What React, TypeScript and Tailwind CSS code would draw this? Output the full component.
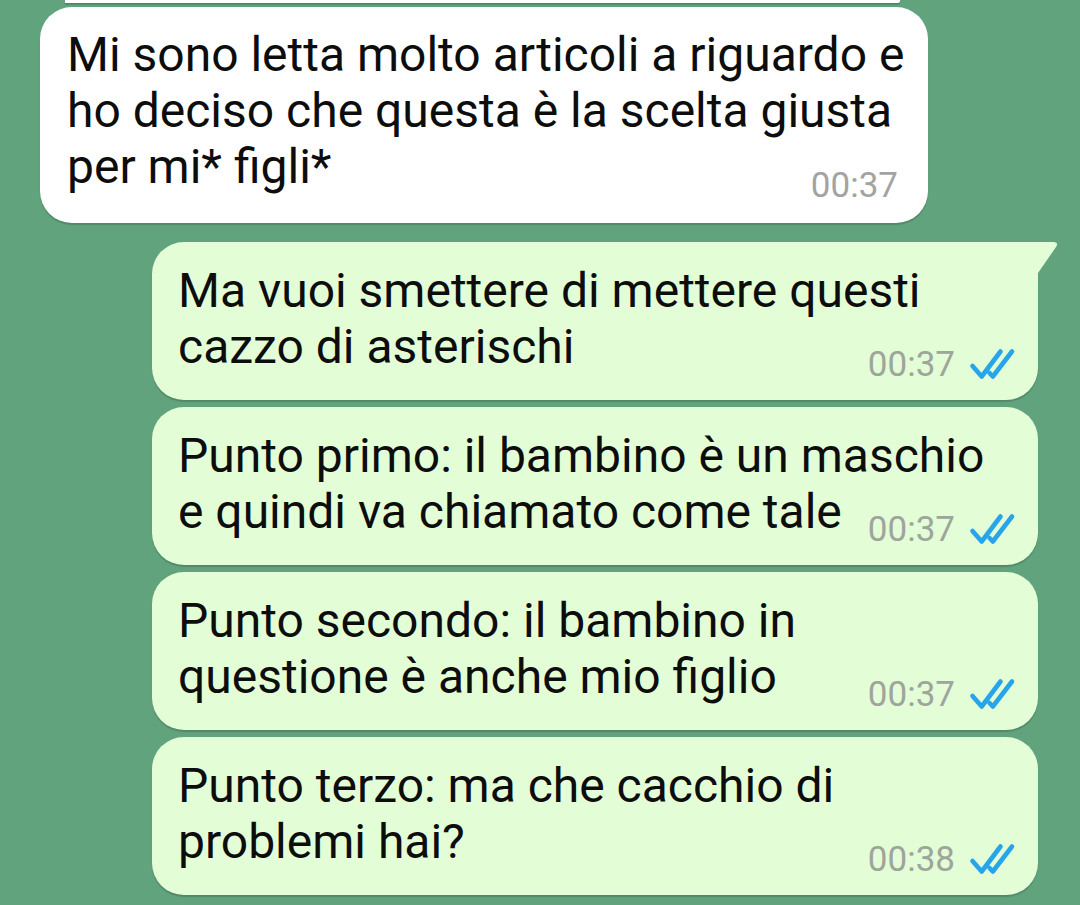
import React from "react";

function Checks() {
  return (
    <svg width="48" height="32" viewBox="0 0 48 32" fill="none" className="shrink-0 -mt-[3px]">
      <path d="M4.5 18 L13.7 28.5 L32.5 3.5" stroke="#27a5ea" strokeWidth="4.6" strokeLinecap="round" strokeLinejoin="round" />
      <path d="M21.5 25 L24.8 28.5 L44 3.5" stroke="#27a5ea" strokeWidth="4.6" strokeLinecap="round" strokeLinejoin="round" />
    </svg>
  );
}

function Outgoing({ lines, time, tail }: { lines: string[]; time: string; tail?: boolean }) {
  return (
    <div
      className={
        "relative w-[886px] bg-[#e3fdd7] pl-[26px] pr-[22px] pt-[21px] pb-[15px] flex flex-col shadow-[0_2px_1px_rgba(0,0,0,0.16)] " +
        (tail ? "rounded-[32px] rounded-tr-none" : "rounded-[32px]")
      }
    >
      {tail && (
        <svg
          className="absolute top-0 right-[-21px]"
          width="22"
          height="32"
          viewBox="0 0 22 32"
        >
          <path d="M0 0 L16 0 Q22 0 19 5 L1 31 L0 31 Z" fill="#e3fdd7" />
        </svg>
      )}
      <div className="text-[48px] leading-[56px] text-[#0d0d0d]">
        {lines.map((l, i) => (
          <div key={i} className="whitespace-nowrap">
            {l}
          </div>
        ))}
      </div>
      <div className="flex justify-end items-center gap-[13px] -mt-[30px] h-[40px]">
        <span className="text-[35px] leading-[40px] text-[#9ea59b]">{time}</span>
        <Checks />
      </div>
    </div>
  );
}

export default function App() {
  return (
    <div
      className="w-[1080px] h-[905px] bg-[#61a37d] overflow-hidden flex flex-col"
      style={{ fontFamily: "Roboto, 'Noto Sans', sans-serif" }}
    >
      <div className="ml-[65px] w-[835px] h-[3px] bg-white rounded-br-[2px] shadow-[0_1.5px_1px_rgba(0,0,0,0.2)]" />
      <div className="mt-[4px] ml-[40px] w-[888px] bg-white rounded-[32px] pl-[27px] pr-[30px] pt-[20px] pb-[17px] flex flex-col shadow-[0_2px_1px_rgba(0,0,0,0.16)]">
        <div className="text-[48px] leading-[56px] text-[#0d0d0d]">
          <div className="whitespace-nowrap">Mi sono letta molto articoli a riguardo e</div>
          <div className="whitespace-nowrap">ho deciso che questa è la scelta giusta</div>
          <div className="whitespace-nowrap">per mi* figli*</div>
        </div>
        <div className="flex justify-end -mt-[29px] h-[40px]">
          <span className="text-[35px] leading-[40px] text-[#a3a3a3]">00:37</span>
        </div>
      </div>
      <div className="mt-[19px] ml-[152px] flex flex-col gap-[7px]">
        <Outgoing tail lines={["Ma vuoi smettere di mettere questi", "cazzo di asterischi"]} time="00:37" />
        <Outgoing lines={["Punto primo: il bambino è un maschio", "e quindi va chiamato come tale"]} time="00:37" />
        <Outgoing lines={["Punto secondo: il bambino in", "questione è anche mio figlio"]} time="00:37" />
        <Outgoing lines={["Punto terzo: ma che cacchio di", "problemi hai?"]} time="00:38" />
      </div>
    </div>
  );
}
